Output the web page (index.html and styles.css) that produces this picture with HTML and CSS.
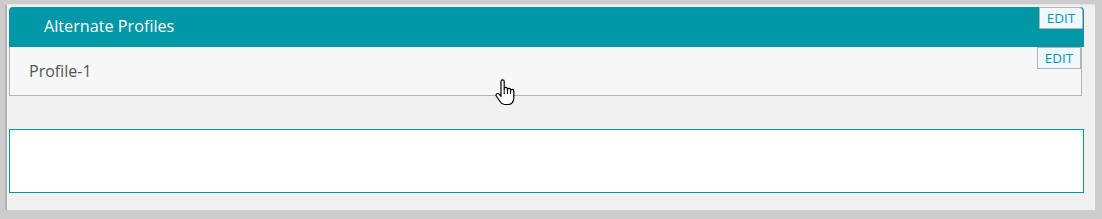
FILE: index.html
```html
<!DOCTYPE html>
<html>
<head>
<meta charset="utf-8">
<link rel="stylesheet" href="styles.css">
</head>
<body>
<div class="panel">
  <div class="header">
    <span class="title">Alternate Profiles</span>
    <button class="edit edit-top">EDIT</button>
  </div>
  <div class="profile-row">
    <span class="profile-name">Profile-1</span>
    <button class="edit">EDIT</button>
  </div>
  <div class="blank-box"></div>
</div>
<svg class="cursor" width="22" height="28" viewBox="0 0 22 28">
  <path d="M7,2.5 a1.6,1.6 0 0 1 3.2,0 V10 a1.6,1.6 0 0 1 3.2,0 V11 a1.6,1.6 0 0 1 3.2,0 V12 a1.6,1.6 0 0 1 3.2,0 V19 c0,3.5 -2.2,6.5 -5.5,6.5 H10.5 c-2.2,0 -3.2,-1 -4.5,-3 L2.3,17 a1.7,1.7 0 0 1 2.8,-1.9 L7,17.5 Z" fill="#fff" stroke="#000" stroke-width="1.2" stroke-linejoin="round"/>
  <path d="M10.2,10 V15 M13.4,11 V15 M16.6,12 V15" stroke="#000" stroke-width="1" fill="none"/>
</svg>
</body>
</html>
```
FILE: styles.css
```css
html, body {
  margin: 0;
  padding: 0;
}
body {
  background: #cccccc;
  width: 1102px;
  height: 219px;
  position: relative;
  font-family: "Open Sans", "Noto Sans", sans-serif;
}
.panel {
  margin: 4px 0 0 5px;
  width: 1086px;
  height: 203px;
  background: #f0f0f0;
  border-left: 2px solid #b2b2b2;
  border-top: 1px solid #e4e4e4;
  padding: 2px 0 0 2px;
  box-sizing: content-box;
}
.header {
  width: 1075px;
  height: 40px;
  background: #0097a7;
  border-radius: 4px 4px 0 0;
  display: flex;
  justify-content: space-between;
  align-items: flex-start;
  box-sizing: border-box;
}
.title {
  color: #ffffff;
  font-size: 16.2px;
  line-height: 38px;
  padding-left: 35px;
}
.edit {
  font-family: "Open Sans", "Noto Sans", sans-serif;
  font-size: 13.5px;
  color: #0097a7;
  background: #f0f8ff;
  border: 1px solid #b4b4b4;
  height: 22px;
  width: 44px;
  padding: 0;
  margin: 0;
  line-height: 20px;
  text-align: center;
  box-sizing: border-box;
}
.edit-top {
  margin-right: 1px;
  border-radius: 0 4px 0 0;
}
.profile-row {
  width: 1073px;
  height: 49px;
  background: #f7f7f7;
  border: 1px solid #b4b4b4;
  border-top: none;
  box-sizing: border-box;
  display: flex;
  justify-content: space-between;
  align-items: flex-start;
}
.profile-name {
  color: #555555;
  font-size: 16px;
  line-height: 48px;
  padding-left: 19px;
}
.blank-box {
  margin-top: 33px;
  width: 1075px;
  height: 64px;
  background: #ffffff;
  border: 1px solid #0097a7;
  box-sizing: border-box;
}
.cursor {
  position: absolute;
  left: 494px;
  top: 79px;
}
```
